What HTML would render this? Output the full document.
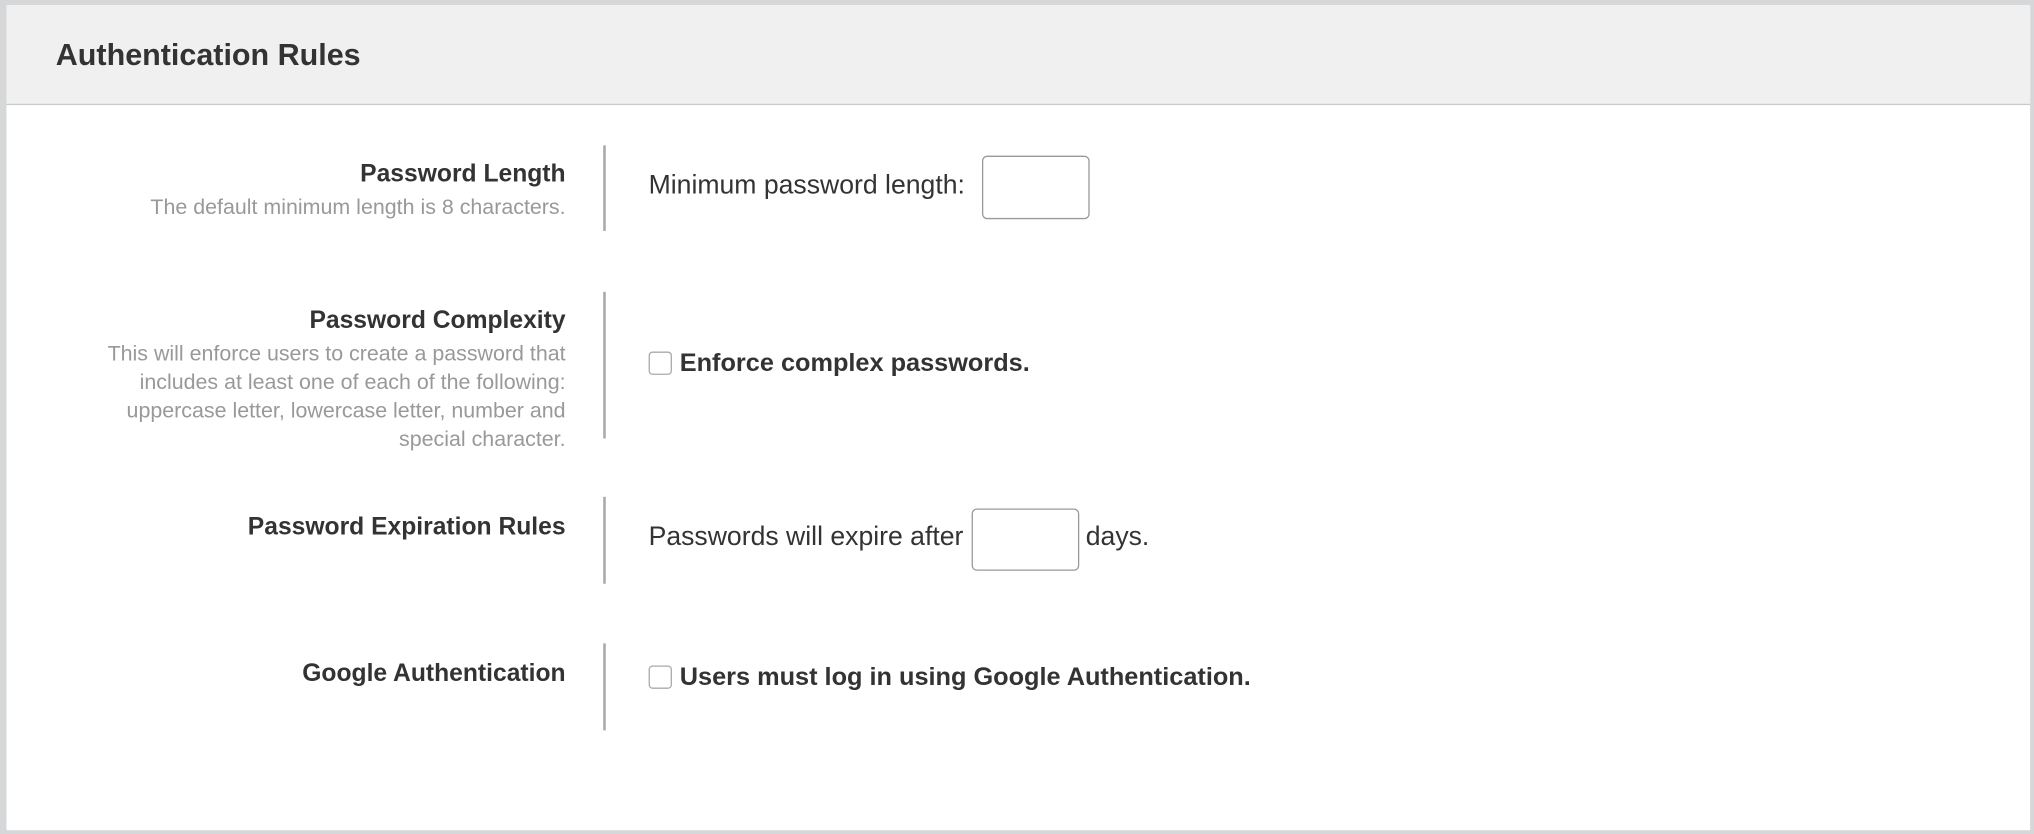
<!DOCTYPE html>
<html><head><style>
html,body{margin:0;padding:0;width:2034px;height:834px;overflow:hidden;background:#d6d7d9;}
#s{position:absolute;left:0;top:0;width:1568px;height:643px;transform:scale(1.2972);transform-origin:0 0;font-family:"Liberation Sans",sans-serif;color:#333;}
.panel{position:absolute;left:5px;top:4px;width:1560px;height:636px;background:#fff;}
.hdr{position:absolute;left:0;top:0;width:1560px;height:76px;background:#f0f0f0;border-bottom:1.5px solid #c9c9c9;}
.hdr div{position:absolute;left:38px;top:25px;font-size:23.5px;font-weight:bold;color:#333;}
.lab{position:absolute;right:1132px;text-align:right;}
.lab b{display:block;font-size:19px;color:#333;}
.lab span{display:block;font-size:16.5px;color:#999;line-height:22px;margin-top:3px;}
.vl{position:absolute;left:465px;width:2px;background:#aaa;}
.t{position:absolute;font-size:20.5px;color:#333;white-space:nowrap;}
.box{position:absolute;border:1.3px solid #999;border-radius:4px;background:#fff;}
.cb{position:absolute;width:16px;height:16px;border:1.3px solid #aaa;border-radius:3px;background:#fff;}
</style></head><body><div id="s">
<div class="panel">
<div class="hdr"><div>Authentication Rules</div></div>
</div>
<div class="lab" style="top:124px"><b>Password Length</b><span>The default minimum length is 8 characters.</span></div>
<div class="vl" style="top:112px;height:66px"></div>
<div class="t" style="left:500px;top:131px">Minimum password length:</div>
<div class="box" style="left:757px;top:120px;width:81px;height:47px"></div>

<div class="lab" style="top:237px;width:385px"><b>Password Complexity</b><span>This will enforce users to create a password that includes at least one of each of the following: uppercase letter, lowercase letter, number and special character.</span></div>
<div class="vl" style="top:225px;height:113px"></div>
<div class="cb" style="left:500px;top:271px"></div>
<div class="t" style="left:524px;top:269px;font-weight:bold;font-size:19.5px">Enforce complex passwords.</div>

<div class="lab" style="top:396px"><b>Password Expiration Rules</b></div>
<div class="vl" style="top:383px;height:67px"></div>
<div class="t" style="left:500px;top:402px">Passwords will expire after</div>
<div class="box" style="left:749px;top:392px;width:81px;height:46px"></div>
<div class="t" style="left:837px;top:402px">days.</div>

<div class="lab" style="top:509px"><b>Google Authentication</b></div>
<div class="vl" style="top:496px;height:67px"></div>
<div class="cb" style="left:500px;top:513px"></div>
<div class="t" style="left:524px;top:511px;font-weight:bold;font-size:19.5px">Users must log in using Google Authentication.</div>
</div></body></html>
